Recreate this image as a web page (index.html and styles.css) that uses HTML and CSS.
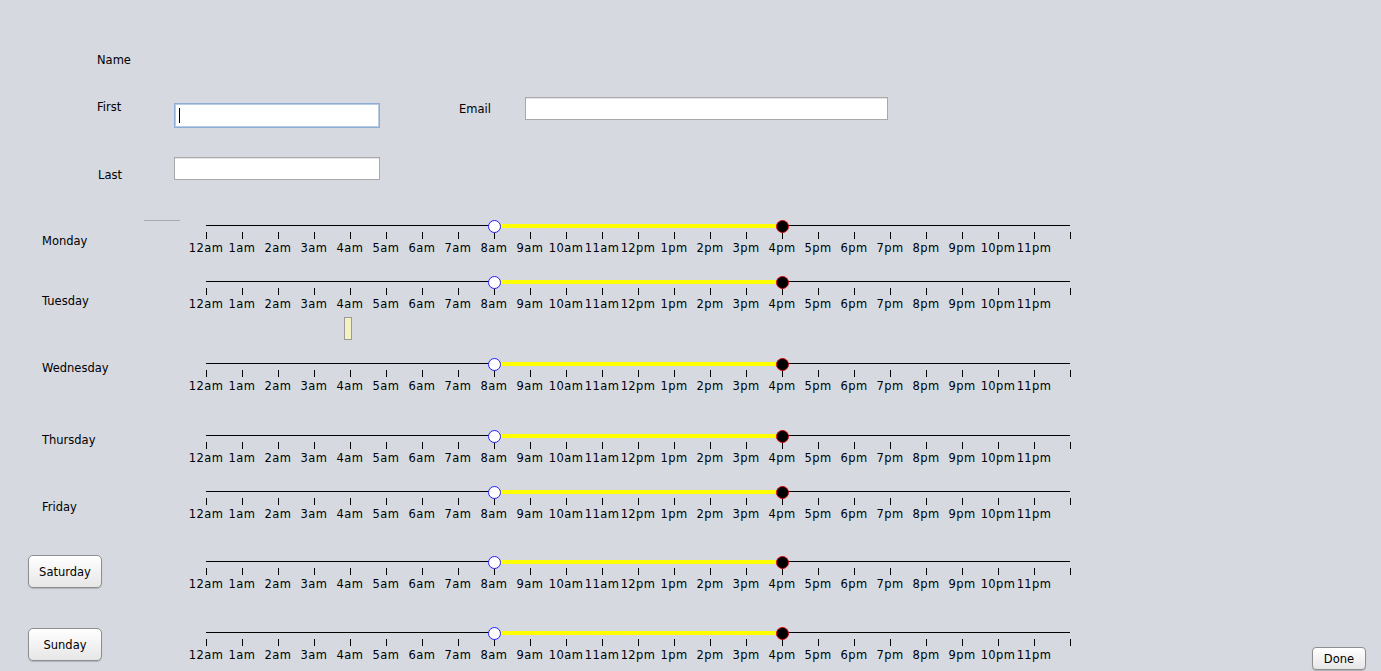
FILE: index.html
```html
<!DOCTYPE html>
<html>
<head>
<meta charset="utf-8">
<title>Schedule</title>
<link rel="stylesheet" href="styles.css">
</head>
<body>
<div class="page">
  <div class="name">Name</div>
  <div class="row row-first">
    <div class="lbl lbl-first">First</div>
    <div class="field focus"><span class="caret"></span></div>
    <div class="lbl lbl-email">Email</div>
    <div class="field email"></div>
  </div>
  <div class="row row-last">
    <div class="lbl lbl-last">Last</div>
    <div class="field"></div>
  </div>
  <div class="sep"></div>

  <div class="day mon">
    <div class="day-label">Monday</div>
    <div class="slider">
      <div class="track"><div class="range"></div><div class="thumb lo"></div><div class="thumb hi"></div></div>
      <div class="scale"><span class="t">12am</span><span class="t">1am</span><span class="t">2am</span><span class="t">3am</span><span class="t">4am</span><span class="t">5am</span><span class="t">6am</span><span class="t">7am</span><span class="t">8am</span><span class="t">9am</span><span class="t">10am</span><span class="t">11am</span><span class="t">12pm</span><span class="t">1pm</span><span class="t">2pm</span><span class="t">3pm</span><span class="t">4pm</span><span class="t">5pm</span><span class="t">6pm</span><span class="t">7pm</span><span class="t">8pm</span><span class="t">9pm</span><span class="t">10pm</span><span class="t">11pm</span><span class="t"></span></div>
    </div>
  </div>

  <div class="day tue">
    <div class="day-label">Tuesday</div>
    <div class="slider">
      <div class="track"><div class="range"></div><div class="thumb lo"></div><div class="thumb hi"></div></div>
      <div class="scale"><span class="t">12am</span><span class="t">1am</span><span class="t">2am</span><span class="t">3am</span><span class="t">4am</span><span class="t">5am</span><span class="t">6am</span><span class="t">7am</span><span class="t">8am</span><span class="t">9am</span><span class="t">10am</span><span class="t">11am</span><span class="t">12pm</span><span class="t">1pm</span><span class="t">2pm</span><span class="t">3pm</span><span class="t">4pm</span><span class="t">5pm</span><span class="t">6pm</span><span class="t">7pm</span><span class="t">8pm</span><span class="t">9pm</span><span class="t">10pm</span><span class="t">11pm</span><span class="t"></span></div>
    </div>
  </div>

  <div class="day wed">
    <div class="day-label">Wednesday</div>
    <div class="slider">
      <div class="track"><div class="range"></div><div class="thumb lo"></div><div class="thumb hi"></div></div>
      <div class="scale"><span class="t">12am</span><span class="t">1am</span><span class="t">2am</span><span class="t">3am</span><span class="t">4am</span><span class="t">5am</span><span class="t">6am</span><span class="t">7am</span><span class="t">8am</span><span class="t">9am</span><span class="t">10am</span><span class="t">11am</span><span class="t">12pm</span><span class="t">1pm</span><span class="t">2pm</span><span class="t">3pm</span><span class="t">4pm</span><span class="t">5pm</span><span class="t">6pm</span><span class="t">7pm</span><span class="t">8pm</span><span class="t">9pm</span><span class="t">10pm</span><span class="t">11pm</span><span class="t"></span></div>
    </div>
  </div>

  <div class="day thu">
    <div class="day-label">Thursday</div>
    <div class="slider">
      <div class="track"><div class="range"></div><div class="thumb lo"></div><div class="thumb hi"></div></div>
      <div class="scale"><span class="t">12am</span><span class="t">1am</span><span class="t">2am</span><span class="t">3am</span><span class="t">4am</span><span class="t">5am</span><span class="t">6am</span><span class="t">7am</span><span class="t">8am</span><span class="t">9am</span><span class="t">10am</span><span class="t">11am</span><span class="t">12pm</span><span class="t">1pm</span><span class="t">2pm</span><span class="t">3pm</span><span class="t">4pm</span><span class="t">5pm</span><span class="t">6pm</span><span class="t">7pm</span><span class="t">8pm</span><span class="t">9pm</span><span class="t">10pm</span><span class="t">11pm</span><span class="t"></span></div>
    </div>
  </div>

  <div class="day fri">
    <div class="day-label">Friday</div>
    <div class="slider">
      <div class="track"><div class="range"></div><div class="thumb lo"></div><div class="thumb hi"></div></div>
      <div class="scale"><span class="t">12am</span><span class="t">1am</span><span class="t">2am</span><span class="t">3am</span><span class="t">4am</span><span class="t">5am</span><span class="t">6am</span><span class="t">7am</span><span class="t">8am</span><span class="t">9am</span><span class="t">10am</span><span class="t">11am</span><span class="t">12pm</span><span class="t">1pm</span><span class="t">2pm</span><span class="t">3pm</span><span class="t">4pm</span><span class="t">5pm</span><span class="t">6pm</span><span class="t">7pm</span><span class="t">8pm</span><span class="t">9pm</span><span class="t">10pm</span><span class="t">11pm</span><span class="t"></span></div>
    </div>
  </div>

  <div class="day sat">
    <div class="day-label btn-cell"><button class="btn">Saturday</button></div>
    <div class="slider">
      <div class="track"><div class="range"></div><div class="thumb lo"></div><div class="thumb hi"></div></div>
      <div class="scale"><span class="t">12am</span><span class="t">1am</span><span class="t">2am</span><span class="t">3am</span><span class="t">4am</span><span class="t">5am</span><span class="t">6am</span><span class="t">7am</span><span class="t">8am</span><span class="t">9am</span><span class="t">10am</span><span class="t">11am</span><span class="t">12pm</span><span class="t">1pm</span><span class="t">2pm</span><span class="t">3pm</span><span class="t">4pm</span><span class="t">5pm</span><span class="t">6pm</span><span class="t">7pm</span><span class="t">8pm</span><span class="t">9pm</span><span class="t">10pm</span><span class="t">11pm</span><span class="t"></span></div>
    </div>
  </div>

  <div class="day sun">
    <div class="day-label btn-cell"><button class="btn">Sunday</button></div>
    <div class="slider">
      <div class="track"><div class="range"></div><div class="thumb lo"></div><div class="thumb hi"></div></div>
      <div class="scale"><span class="t">12am</span><span class="t">1am</span><span class="t">2am</span><span class="t">3am</span><span class="t">4am</span><span class="t">5am</span><span class="t">6am</span><span class="t">7am</span><span class="t">8am</span><span class="t">9am</span><span class="t">10am</span><span class="t">11am</span><span class="t">12pm</span><span class="t">1pm</span><span class="t">2pm</span><span class="t">3pm</span><span class="t">4pm</span><span class="t">5pm</span><span class="t">6pm</span><span class="t">7pm</span><span class="t">8pm</span><span class="t">9pm</span><span class="t">10pm</span><span class="t">11pm</span><span class="t"></span></div>
    </div>
    <button class="btn done">Done</button>
  </div>

  <div class="tip"></div>
</div>
</body>
</html>
```
FILE: styles.css
```css
* { box-sizing: border-box; }
html, body { margin: 0; padding: 0; }
body {
  background: #d6d9e0;
  font-family: "DejaVu Sans", "Liberation Sans", sans-serif;
  font-size: 11.5px;
  color: #000;
  overflow: hidden;
}
.page {
  position: relative;
  width: 1381px;
  height: 671px;
}
.name {
  padding: 53px 0 0 97px;
  line-height: 14px;
  height: 67px;
}
.row {
  display: flex;
  align-items: flex-start;
}
.lbl {
  line-height: 14px;
  white-space: nowrap;
}
.row-first {
  margin-top: 30px;
  height: 31px;
  padding-left: 97px;
}
.lbl-first { width: 77px; margin-top: 3px; }
.lbl-email { width: 66px; margin-left: 79px; margin-top: 5px; }
.row-last {
  margin-top: 29px;
  height: 24px;
  padding-left: 98px;
}
.lbl-last { width: 76px; margin-top: 11px; }
.field {
  position: relative;
  width: 206px;
  height: 23px;
  background: #fff;
  border: 1px solid #a9a9a9;
  box-shadow: inset 0 1px 0 #e4e4e4;
}
.field.focus {
  height: 25px;
  margin-top: 6px;
  border: 1px solid #8fadd4;
  box-shadow: inset 0 0 0 1px #b8cce6;
}
.field.email { width: 363px; }
.caret {
  position: absolute;
  left: 4px;
  top: 4px;
  width: 1px;
  height: 15px;
  background: #000;
}
.sep {
  margin: 39px 0 0 144px;
  width: 36px;
  height: 1px;
  background: #a8abb0;
}
.day {
  display: flex;
  align-items: flex-start;
  height: 37px;
}
.day-label {
  width: 188px;
  flex: none;
  padding-left: 42px;
  line-height: 14px;
  white-space: nowrap;
}
.day-label.btn-cell { padding-left: 28px; }
.mon { margin-top: -3px; }
.mon .day-label { margin-top: 16px; }
.tue { margin-top: 19px; }
.tue .day-label { margin-top: 20px; }
.wed { margin-top: 45px; }
.wed .day-label { margin-top: 5px; }
.thu { margin-top: 35px; }
.thu .day-label { margin-top: 5px; }
.fri { margin-top: 19px; }
.fri .day-label { margin-top: 16px; }
.sat { margin-top: 33px; }
.sat .day-label { margin-top: 1px; }
.sun { margin-top: 34px; }
.sun .day-label { margin-top: 3px; }

.slider {
  flex: none;
  width: 900px;
  padding-top: 7px;
}
.track {
  position: relative;
  margin-left: 18px;
  width: 864px;
  height: 1px;
  background: #000;
}
.range {
  position: absolute;
  top: -1px;
  left: 288px;
  width: 288px;
  height: 4px;
  background: #ffff00;
}
.thumb {
  position: absolute;
  top: -5px;
  width: 13px;
  height: 13px;
  margin-left: -6px;
  border-radius: 50%;
}
.thumb.lo {
  left: 288px;
  background: #fff;
  border: 1.5px solid #1f1fff;
}
.thumb.hi {
  left: 576px;
  background: #000;
  border: 1.5px solid #e40000;
}
.scale {
  display: flex;
  margin-top: 6px;
}
.t {
  width: 36px;
  flex: none;
  display: flex;
  flex-direction: column;
  align-items: center;
  line-height: 14px;
  white-space: nowrap;
  letter-spacing: 0.4px;
}
.t::before {
  content: "";
  width: 1px;
  height: 7px;
  margin-bottom: 2px;
  background: #000;
}
.btn {
  display: flex;
  align-items: center;
  justify-content: center;
  width: 74px;
  height: 33px;
  padding: 0;
  font: inherit;
  color: #000;
  border: 1px solid #8e8e8e;
  border-radius: 5px;
  background: linear-gradient(#ffffff, #f4f4f4 45%, #e6e6e6);
  box-shadow: 0 1px 1px rgba(0, 0, 0, 0.18);
}
.btn.done {
  width: 54px;
  height: 23px;
  margin: 22px 15px 0 auto;
  border-radius: 4px;
}
.tip {
  position: absolute;
  left: 344px;
  top: 317px;
  width: 8px;
  height: 23px;
  background: #f3f3c2;
  border: 1px solid #9a9a9a;
}
```
